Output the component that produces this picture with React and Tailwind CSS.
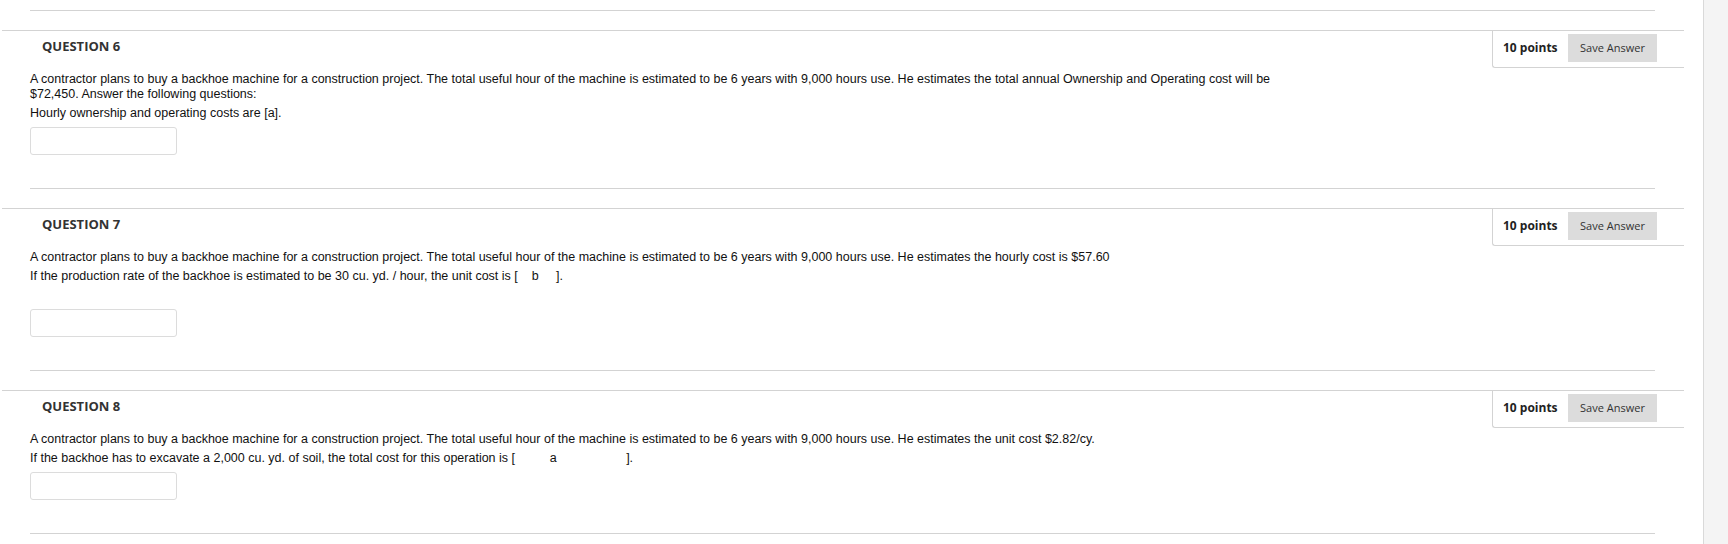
const QUESTIONS = [
  {
    n: 6,
    paras: [
      <>A contractor plans to buy a backhoe machine for a construction project. The total useful hour of the machine is estimated to be 6 years with 9,000 hours use. He estimates the total annual Ownership and Operating cost will be<br />$72,450. Answer the following questions:</>,
      <>Hourly ownership and operating costs are [a].</>,
    ],
  },
  {
    n: 7,
    paras: [
      <>A contractor plans to buy a backhoe machine for a construction project. The total useful hour of the machine is estimated to be 6 years with 9,000 hours use. He estimates the hourly cost is $57.60</>,
      <>If the production rate of the backhoe is estimated to be 30 cu. yd. / hour, the unit cost is [&nbsp;&nbsp;&nbsp;&nbsp;b&nbsp;&nbsp;&nbsp;&nbsp;&nbsp;].</>,
      <>&nbsp;</>,
    ],
  },
  {
    n: 8,
    paras: [
      <>A contractor plans to buy a backhoe machine for a construction project. The total useful hour of the machine is estimated to be 6 years with 9,000 hours use. He estimates the unit cost $2.82/cy.</>,
      <>If the backhoe has to excavate a 2,000 cu. yd. of soil, the total cost for this operation is [&nbsp;&nbsp;&nbsp;&nbsp;&nbsp;&nbsp;&nbsp;&nbsp;&nbsp;&nbsp;a&nbsp;&nbsp;&nbsp;&nbsp;&nbsp;&nbsp;&nbsp;&nbsp;&nbsp;&nbsp;&nbsp;&nbsp;&nbsp;&nbsp;&nbsp;&nbsp;&nbsp;&nbsp;&nbsp;&nbsp;].</>,
    ],
  },
]

const openSans = { fontFamily: '"Open Sans", "Liberation Sans", sans-serif' }

function Question({ q }) {
  return (
    <div>
      <div className="ml-[2px] w-[1682px] border-t border-[#d3d3d3]">
        <div className="flex items-start justify-between">
          <h3 className="pl-[40px] pt-[6px] text-[13px] leading-[18px] font-bold text-[#333] font-['Open_Sans',sans-serif]">
            QUESTION {q.n}
          </h3>
          <div className="flex items-center w-[192px] pl-[10px] pt-[3px] pb-[5px] border-l border-b border-[#d3d3d3] rounded-bl-[3px] bg-white">
            <span className="text-[12px] font-bold text-[#222] font-['Open_Sans',sans-serif] whitespace-nowrap">10 points</span>
            <button className="ml-auto mr-[27px] w-[89px] h-[28px] bg-[#dcdcdc] text-[11px] text-[#333] font-['Open_Sans',sans-serif]">
              Save Answer
            </button>
          </div>
        </div>
        <div className="pl-[28px] mt-[4px] text-[12.5px] leading-[15px] text-[#111] font-['Liberation_Sans',Arial,sans-serif]">
          {q.paras.map((p, i) => (
            <p key={i} className="mb-[4px] whitespace-nowrap">{p}</p>
          ))}
          <div className="mt-[6px] w-[147px] h-[28px] rounded-[3px] border border-[#dcdcdc] bg-white" />
        </div>
      </div>
      <div className="ml-[30px] mt-[33px] mb-[19px] w-[1625px] h-px bg-[#d3d3d3]" />
    </div>
  )
}

export default function App() {
  return (
    <div className="flex w-[1728px] h-[544px] overflow-hidden bg-white" style={openSans}>
      <div className="flex-1">
        <div className="ml-[30px] mt-[10px] mb-[19px] w-[1625px] h-px bg-[#d3d3d3]" />
        {QUESTIONS.map((q) => (
          <Question key={q.n} q={q} />
        ))}
      </div>
      <div className="w-[25px] border-l border-[#d9d9d9] bg-[#f4f4f4]" />
    </div>
  )
}
